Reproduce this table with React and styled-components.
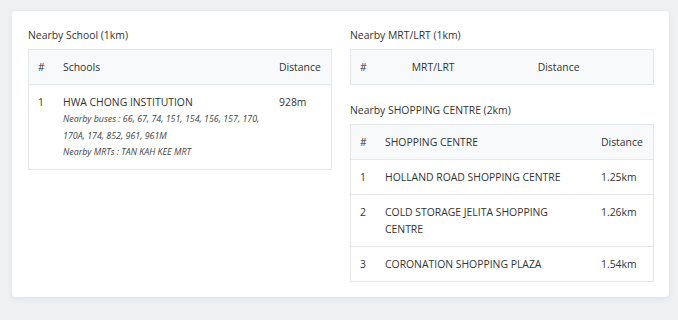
import React from "react";
import styled, { createGlobalStyle } from "styled-components";

const Global = createGlobalStyle`
  html, body { margin: 0; padding: 0; background: #eef0f2; }
  body { font-family: "Open Sans", "Noto Sans", sans-serif; color: #333; }
`;

const Page = styled.div`
  padding: 11px 9px 20px 12px;
`;

const Card = styled.div`
  background: #fff;
  border-radius: 4px;
  box-shadow: 0 2px 6px rgba(0,0,0,0.06);
  padding: 16px 15px 15px 16px;
  display: grid;
  grid-template-columns: 304px 304px;
  column-gap: 18px;
  align-items: start;
`;

const Column = styled.div`
  display: flex;
  flex-direction: column;
`;

const Title = styled.div`
  font-size: 10.4px;
  line-height: 17px;
  color: #333;
  margin: ${p => (p.$spaced ? "17px 0 5px" : "0 0 5px")};
`;

const Table = styled.table`
  width: 100%;
  border-collapse: collapse;
  border: 1px solid #e3e6ea;
  font-size: 10.4px;
  line-height: 17px;
  color: #333;
  table-layout: ${p => (p.$auto ? "auto" : "fixed")};
`;

const Th = styled.th`
  text-align: left;
  font-weight: 400;
  padding: 9px 9px 8px;
  background: #f8f9fa;
  border-bottom: 1px solid #e3e6ea;
  width: ${p => p.$w || "auto"};
`;

const Td = styled.td`
  padding: 9px 9px 8px;
  vertical-align: top;
  border-top: 1px solid #e3e6ea;
`;

const Note = styled.div`
  font-style: italic;
  font-size: 8.9px;
  line-height: 16.5px;
  color: #444;
`;

const shops = [
  ["1", "HOLLAND ROAD SHOPPING CENTRE", "1.25km"],
  ["2", "COLD STORAGE JELITA SHOPPING CENTRE", "1.26km"],
  ["3", "CORONATION SHOPPING PLAZA", "1.54km"],
];

export default function App() {
  return (
    <>
      <Global />
      <Page>
        <Card>
          <Column>
            <Title>Nearby School (1km)</Title>
            <Table>
              <thead>
                <tr>
                  <Th $w="7px">#</Th>
                  <Th>Schools</Th>
                  <Th $w="43px">Distance</Th>
                </tr>
              </thead>
              <tbody>
                <tr>
                  <Td>1</Td>
                  <Td>
                    HWA CHONG INSTITUTION
                    <Note>Nearby buses : 66, 67, 74, 151, 154, 156, 157, 170, 170A, 174, 852, 961, 961M</Note>
                    <Note>Nearby MRTs : TAN KAH KEE MRT</Note>
                  </Td>
                  <Td>928m</Td>
                </tr>
              </tbody>
            </Table>
          </Column>
          <Column>
            <Title>Nearby MRT/LRT (1km)</Title>
            <Table $auto>
              <thead>
                <tr>
                  <Th>#</Th>
                  <Th>MRT/LRT</Th>
                  <Th>Distance</Th>
                </tr>
              </thead>
            </Table>
            <Title $spaced>Nearby SHOPPING CENTRE (2km)</Title>
            <Table>
              <thead>
                <tr>
                  <Th $w="7px">#</Th>
                  <Th>SHOPPING CENTRE</Th>
                  <Th $w="43px">Distance</Th>
                </tr>
              </thead>
              <tbody>
                {shops.map(([n, name, d]) => (
                  <tr key={n}>
                    <Td>{n}</Td>
                    <Td>{name}</Td>
                    <Td>{d}</Td>
                  </tr>
                ))}
              </tbody>
            </Table>
          </Column>
        </Card>
      </Page>
    </>
  );
}
